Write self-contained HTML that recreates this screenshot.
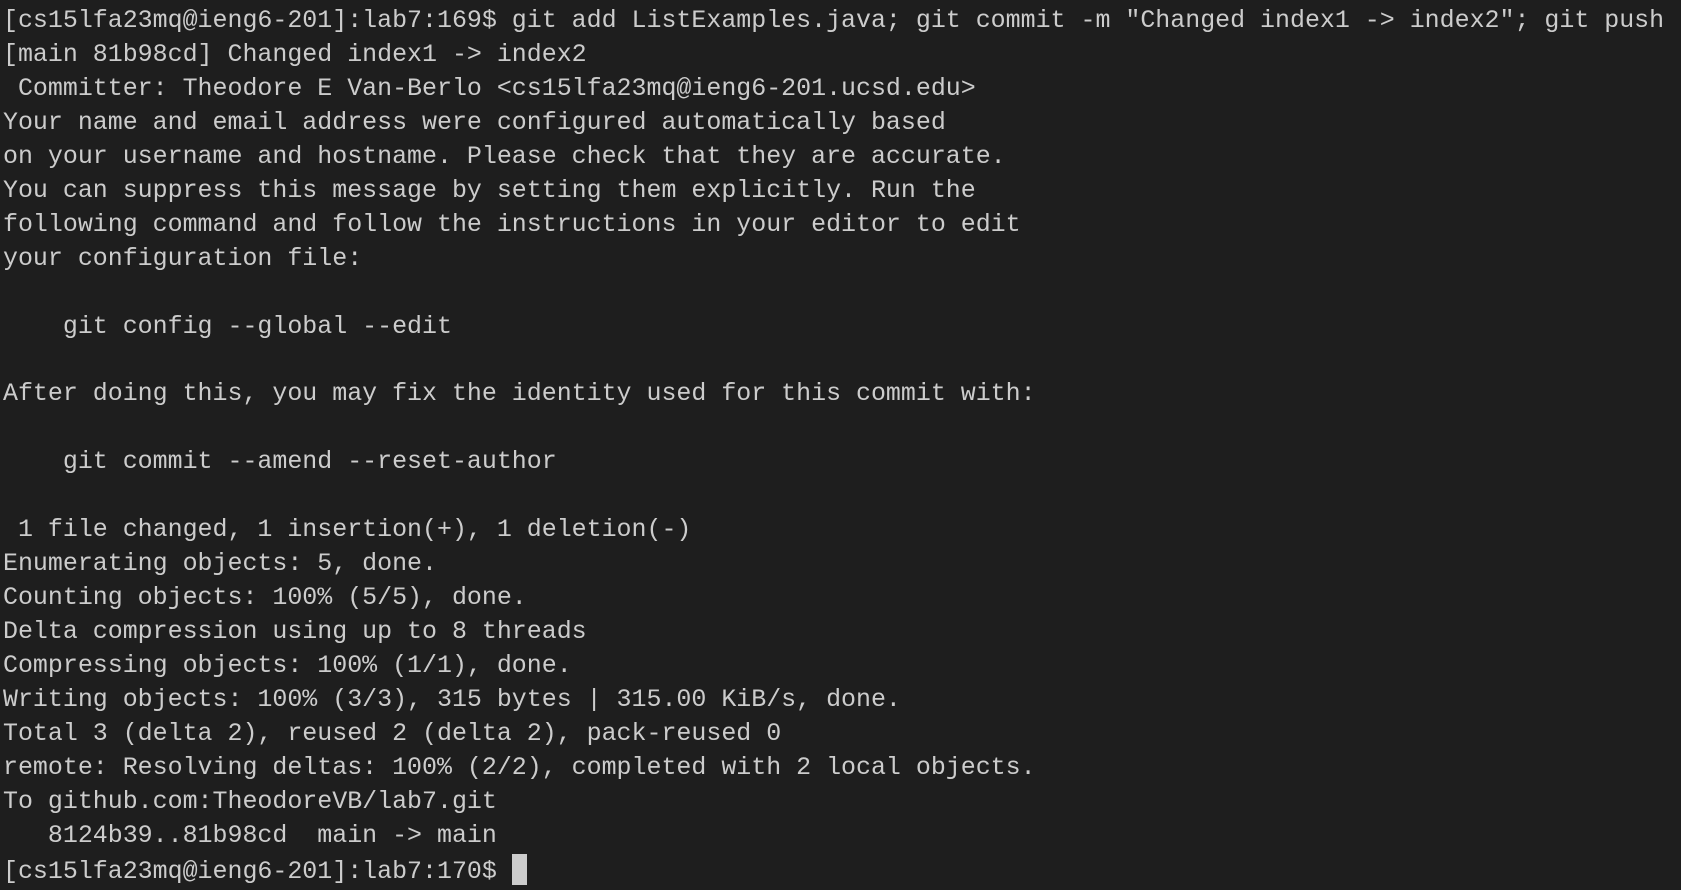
<!DOCTYPE html>
<html><head><meta charset="utf-8"><style>
html,body{margin:0;padding:0;background:#1e1e1e;width:1681px;height:889px;overflow:hidden}
pre{margin:0;position:absolute;left:3px;top:5px;font-family:"Liberation Mono",monospace;font-size:24.95px;line-height:33.95px;color:#cccccc;white-space:pre}
.cur{display:inline-block;width:15px;height:31px;background:#cccccc;vertical-align:-7px}
</style></head><body><pre>[cs15lfa23mq@ieng6-201]:lab7:169$ git add ListExamples.java; git commit -m "Changed index1 -&gt; index2"; git push
[main 81b98cd] Changed index1 -&gt; index2
 Committer: Theodore E Van-Berlo &lt;cs15lfa23mq@ieng6-201.ucsd.edu&gt;
Your name and email address were configured automatically based
on your username and hostname. Please check that they are accurate.
You can suppress this message by setting them explicitly. Run the
following command and follow the instructions in your editor to edit
your configuration file:

    git config --global --edit

After doing this, you may fix the identity used for this commit with:

    git commit --amend --reset-author

 1 file changed, 1 insertion(+), 1 deletion(-)
Enumerating objects: 5, done.
Counting objects: 100% (5/5), done.
Delta compression using up to 8 threads
Compressing objects: 100% (1/1), done.
Writing objects: 100% (3/3), 315 bytes | 315.00 KiB/s, done.
Total 3 (delta 2), reused 2 (delta 2), pack-reused 0
remote: Resolving deltas: 100% (2/2), completed with 2 local objects.
To github.com:TheodoreVB/lab7.git
   8124b39..81b98cd  main -&gt; main
[cs15lfa23mq@ieng6-201]:lab7:170$ <span class="cur"></span></pre></body></html>
